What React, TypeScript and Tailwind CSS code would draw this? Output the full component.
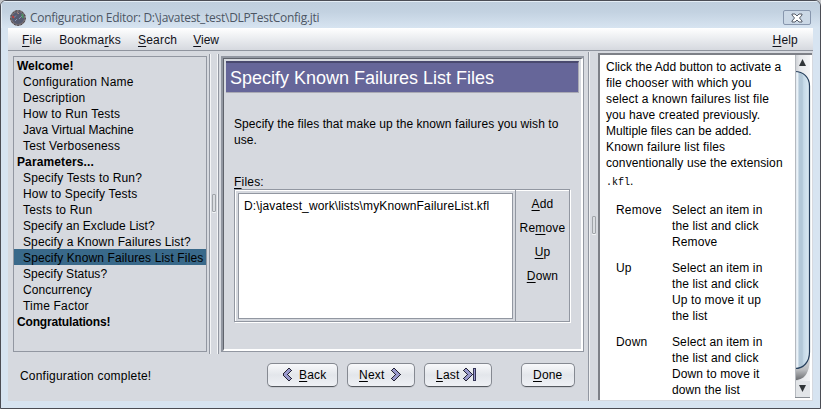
import React from "react";

type Item = { label: string; tracking: string; bold?: boolean; selected?: boolean };

const items: Item[] = [
  { label: "Welcome!", tracking: "tracking-[0px]", bold: true },
  { label: "Configuration Name", tracking: "tracking-[0.22px]" },
  { label: "Description", tracking: "tracking-[0.22px]" },
  { label: "How to Run Tests", tracking: "tracking-[0.22px]" },
  { label: "Java Virtual Machine", tracking: "tracking-[-0.03px]" },
  { label: "Test Verboseness", tracking: "tracking-[0.15px]" },
  { label: "Parameters...", tracking: "tracking-[0.12px]", bold: true },
  { label: "Specify Tests to Run?", tracking: "tracking-[0.15px]" },
  { label: "How to Specify Tests", tracking: "tracking-[0.16px]" },
  { label: "Tests to Run", tracking: "tracking-[0.22px]" },
  { label: "Specify an Exclude List?", tracking: "tracking-[0.04px]" },
  { label: "Specify a Known Failures List?", tracking: "tracking-[0.12px]" },
  { label: "Specify Known Failures List Files", tracking: "tracking-[0.13px]", selected: true },
  { label: "Specify Status?", tracking: "tracking-[0.05px]" },
  { label: "Concurrency", tracking: "tracking-[0.07px]" },
  { label: "Time Factor", tracking: "tracking-[0.2px]" },
  { label: "Congratulations!", tracking: "tracking-[-0.17px]", bold: true },
];

const helpLines: [string, string][] = [
  ["Click the Add button to activate a", "tracking-[0.01px]"],
  ["file chooser with which you", "tracking-[0.1px]"],
  ["select a known failures list file", "tracking-[0.15px]"],
  ["you have created previously.", "tracking-[0.08px]"],
  ["Multiple files can be added.", "tracking-[0.01px]"],
  ["Known failure list files", "tracking-[0.16px]"],
  ["conventionally use the extension", "tracking-[0.1px]"],
];

const helpRows: [string, string[]][] = [
  ["Remove", ["Select an item in", "the list and click", "Remove"]],
  ["Up", ["Select an item in", "the list and click", "Up to move it up", "the list"]],
  ["Down", ["Select an item in", "the list and click", "Down to move it", "down the list"]],
];

/** A label whose mnemonic character is underlined. */
function Mnemonic({ text, at = 0 }: { text: string; at?: number }) {
  return (
    <span className="whitespace-nowrap">
      {text.slice(0, at)}
      <span className="underline decoration-1 underline-offset-2 [text-decoration-skip-ink:none]">{text[at]}</span>
      {text.slice(at + 1)}
    </span>
  );
}

function Grip() {
  return <div className="mb-[3px] h-[18px] w-[4px] rounded-[1px] border border-[#a0a4a9] bg-[#d9dce0] shadow-[0_1px_0_#f2f4f6]" />;
}

function Chevron({ dir }: { dir: "left" | "right" }) {
  return (
    <svg width="10" height="14" viewBox="0 0 10 14" shapeRendering="crispEdges">
      <g transform={dir === "left" ? "translate(10 0) scale(-1 1)" : undefined}>
        <path d="M2.500 .5h1l5.500 5.500v1l-5.500 5.500h-1l-2-2 4-4-4-4z" fill="#9999cc" stroke="#222233" />
      </g>
    </svg>
  );
}

function Button({ className, children }: { className: string; children: React.ReactNode }) {
  return (
    <button
      className={
        "flex h-[24px] shrink-0 items-center rounded-[5px] border border-[#858991] border-b-[#55595f] bg-linear-to-b from-[#f8f9fb] via-[#e3e6eb] via-50% to-[#eff1f5] shadow-[0_1px_0_#c5c8ce] " +
        className
      }
    >
      {children}
    </button>
  );
}

export default function App() {
  return (
    <div className="h-[409px] w-[821px] overflow-hidden bg-[#c3c5c9] font-['Liberation_Sans',Arial,sans-serif] text-[12px] leading-[16px] tracking-[0.2px] text-black">
      <div className="flex h-[409px] w-[821px] flex-col overflow-hidden rounded-t-[6px] border border-[#4b4d55] bg-[#d7e4f1]">
        {/* Title bar */}
        <div className="flex h-[27px] shrink-0 items-center bg-linear-to-b from-[#bfcedd] via-[#c3d2e1] via-40% to-[#d7e4f1] shadow-[inset_1px_1px_0_#e4edf5]">
          <svg className="mt-[6px] ml-[9px] shrink-0" width="16" height="16" viewBox="0 0 16 16">
            <circle cx="8" cy="8" r="7" fill="#565b70" stroke="#777177" strokeWidth="1.800" />
            <circle cx="8" cy="8" r="7.300" fill="none" stroke="#3c3639" strokeDasharray="1.500 2" />
            <path d="M3.500 8L6 5.500M9 9l3-3M5 11l2-2" stroke="#8290b5" />
            <path d="M2.500 6l1.500 2" stroke="#c43b35" strokeWidth="1.500" />
            <path d="M12 4l1 4" stroke="#4a9560" strokeWidth="1.500" />
            <path d="M7.500 2.500l1 1.500" stroke="#d9a38f" />
          </svg>
          <span className="mt-[7px] ml-[4px] font-['Open_Sans','Noto_Sans',sans-serif] text-[12px] tracking-[-0.27px] whitespace-nowrap text-[#4c5664]">
            Configuration Editor: D:\javatest_test\DLPTestConfig.jti
          </span>
          <button className="mt-[6px] mr-[9px] ml-auto flex h-[15px] w-[28px] items-center justify-center rounded-[2px] border border-[#8796ad] bg-[#cbd8e6]">
            <svg width="12" height="10" viewBox="0 0 12 10">
              <path d="M1 1h3l2 2 2-2h3v1L8.500 5 11 8v1H8L6 7 4 9H1V8l2.500-3L1 2z" fill="#fff" stroke="#454d59" strokeWidth=".9" />
            </svg>
          </button>
        </div>

        <div className="mx-[7px] flex h-[373px] flex-col bg-[#d6d9df]">
          {/* Menu bar */}
          <div className="flex h-[23px] shrink-0 items-center gap-[17px] border-b border-[#8f949e] bg-linear-to-b from-white via-[#eceef1] via-45% to-[#d6d9df] pt-[2px] pr-[15px] pl-[14px] text-[#101018]">
            <Mnemonic text="File" />
            <Mnemonic text="Bookmarks" at={6} />
            <Mnemonic text="Search" />
            <span className="-ml-px tracking-[0px]">
              <Mnemonic text="View" />
            </span>
            <span className="ml-auto">
              <Mnemonic text="Help" />
            </span>
          </div>

          <div className="flex h-[350px]">
            <div className="flex w-[580px] shrink-0 flex-col">
              <div className="flex h-[303px] shrink-0 pt-[3px] pl-[5px]">
                {/* Question tree */}
                <div className="mt-[2px] h-[296px] w-[194px] shrink-0 border border-[#9297a1]">
                  {items.map((it) => (
                    <div
                      key={it.label}
                      className={
                        "h-[16px] pt-[1px] whitespace-nowrap " +
                        it.tracking +
                        (it.bold ? " pl-[3px] font-bold" : " pl-[9px]") +
                        (it.selected ? " bg-[#39698a]" : "")
                      }
                    >
                      {it.label}
                    </div>
                  ))}
                </div>
                <div className="ml-[2px] flex w-[10px] shrink-0 items-center justify-center border-x border-[#9297a1] shadow-[inset_1px_0_0_#f4f5f7,inset_-1px_0_0_#f4f5f7]">
                  <Grip />
                </div>

                {/* Question panel */}
                <div className="mt-[2px] ml-[2px] h-[296px] w-[363px] border-t-2 border-r border-b border-l-2 border-[#9297a1]">
                  <div className="h-full border-t border-r-2 border-b-2 border-l border-t-[#5f636c] border-r-white border-b-white border-l-[#5f636c] px-[2px] pt-[2px]">
                    <div className="h-[32px] w-[353px] border-t-2 border-r border-b border-t-[#49496e] border-r-[#aaaab4] border-b-[#aaaab4] bg-[#666699] pt-[4px] pl-[4px] text-[18px] leading-[22px] tracking-[0px] whitespace-nowrap text-white">
                      Specify Known Failures List Files
                    </div>
                    <div className="mt-[23px] ml-[8px] tracking-[0.07px] whitespace-nowrap">
                      Specify the files that make up the known failures you wish to
                      <br />
                      use.
                    </div>
                    <div className="mt-[26px] ml-[8px]">
                      <Mnemonic text="Files:" />
                    </div>
                    <div className="-mt-px ml-[8px] flex h-[133px] w-[336px] border border-[#9297a1] shadow-[1px_1px_0_#fff,inset_1px_1px_0_#fff]">
                      <div className="m-[3px] h-[126px] w-[275px] shrink-0 border border-[#9297a1] bg-white pt-[4px] pl-[5px] tracking-[0.13px] whitespace-nowrap">
                        D:\javatest_work\lists\myKnownFailureList.kfl
                      </div>
                      <div className="-ml-px flex flex-1 flex-col items-center gap-[8px] border-l border-[#9297a1] pt-[6px]">
                        <Mnemonic text="Add" />
                        <Mnemonic text="Remove" at={2} />
                        <Mnemonic text="Up" />
                        <Mnemonic text="Down" />
                      </div>
                    </div>
                  </div>
                </div>
              </div>

              {/* Status and navigation */}
              <div className="flex pt-[9px] pl-[12px]">
                <span className="w-[247px] pt-[5px]">Configuration complete!</span>
                <Button className="w-[71px] gap-[7px] pl-[14px]">
                  <Chevron dir="left" />
                  <Mnemonic text="Back" />
                </Button>
                <Button className="ml-[9px] w-[68px] gap-[7px] pl-[11px]">
                  <Mnemonic text="Next" />
                  <Chevron dir="right" />
                </Button>
                <Button className="ml-[9px] w-[68px] gap-[4px] pl-[11px]">
                  <Mnemonic text="Last" />
                  <span className="flex">
                    <Chevron dir="right" />
                    <svg width="4" height="14" viewBox="0 0 4 14" shapeRendering="crispEdges">
                      <path d="M.5.5h2v12h-2z" fill="#9999cc" stroke="#333355" />
                    </svg>
                  </span>
                </Button>
                <Button className="ml-[29px] w-[54px] pl-[11px]">
                  <Mnemonic text="Done" />
                </Button>
              </div>
            </div>

            <div className="mt-px flex w-[10px] shrink-0 items-center justify-center border-l border-[#9297a1] shadow-[inset_1px_0_0_#f0f1f3]">
              <Grip />
            </div>

            {/* Help pane */}
            <div className="mt-[2px] flex h-[347px] w-[214px] border-t-2 border-l-2 border-[#7d8087] bg-white">
              <div className="h-[345px] w-[195px] overflow-hidden pt-[4px] pl-[6px] whitespace-nowrap">
                {helpLines.map(([line, tracking]) => (
                  <div key={line} className={tracking}>
                    {line}
                  </div>
                ))}
                <div className="h-[31px] pt-[2px]">
                  <span className="font-['Liberation_Mono',monospace] text-[10px] tracking-[0px]">.kfl</span>.
                </div>
                <div className="flex flex-col gap-[10px] pl-[10px]">
                  {helpRows.map(([name, lines]) => (
                    <div key={name} className="flex">
                      <span className="w-[56px]">{name}</span>
                      <div className="tracking-[0.1px]">
                        {lines.map((l) => (
                          <div key={l}>{l}</div>
                        ))}
                      </div>
                    </div>
                  ))}
                </div>
              </div>
              <svg width="16" height="343" viewBox="0 0 16 343">
                <defs>
                  <linearGradient id="track">
                    <stop offset="0" stopColor="#c9ccd1" />
                    <stop offset=".3" stopColor="#e6e8eb" />
                    <stop offset="1" stopColor="#f3f4f6" />
                  </linearGradient>
                  <linearGradient id="thumb">
                    <stop offset="0" stopColor="#d4dfe9" />
                    <stop offset=".2" stopColor="#eef5fa" />
                    <stop offset=".27" stopColor="#b3c8d8" />
                    <stop offset=".5" stopColor="#b3c8d8" />
                    <stop offset=".6" stopColor="#c6dae8" />
                    <stop offset="1" stopColor="#dceaf3" />
                  </linearGradient>
                  <linearGradient id="shade" x2="0" y2="1">
                    <stop offset="0" stopColor="#e3e4e6" />
                    <stop offset=".6" stopColor="#b9bbbe" />
                    <stop offset="1" stopColor="#6c6e72" />
                  </linearGradient>
                </defs>
                <path d="M0 0h15v328H0z" fill="url(#track)" />
                <path d="M0 300h15c0 16-4 25-15 25z" fill="url(#shade)" />
                <path d="M0 16.500C8 16.500 14.500 22 14.500 31V297c0 10-6 16.500-14.500 16.500z" fill="url(#thumb)" />
                <path d="M0 16.500C8 16.500 14.500 22 14.500 31V297c0 10-6 16.500-14.500 16.500" fill="none" stroke="#263f5c" strokeWidth="1.200" />
                <path d="M.5 0v343" stroke="#b5b9bf" />
                <path d="M1 326h14v16H1z" fill="#e2e5e8" />
                <path d="M0 342.500h15" stroke="#888d93" />
                <path d="M4 11h7L7.500 4z" fill="#303538" />
                <path d="M4 330h7l-3.500 7z" fill="#303538" />
              </svg>
            </div>
          </div>
        </div>
      </div>
    </div>
  );
}
